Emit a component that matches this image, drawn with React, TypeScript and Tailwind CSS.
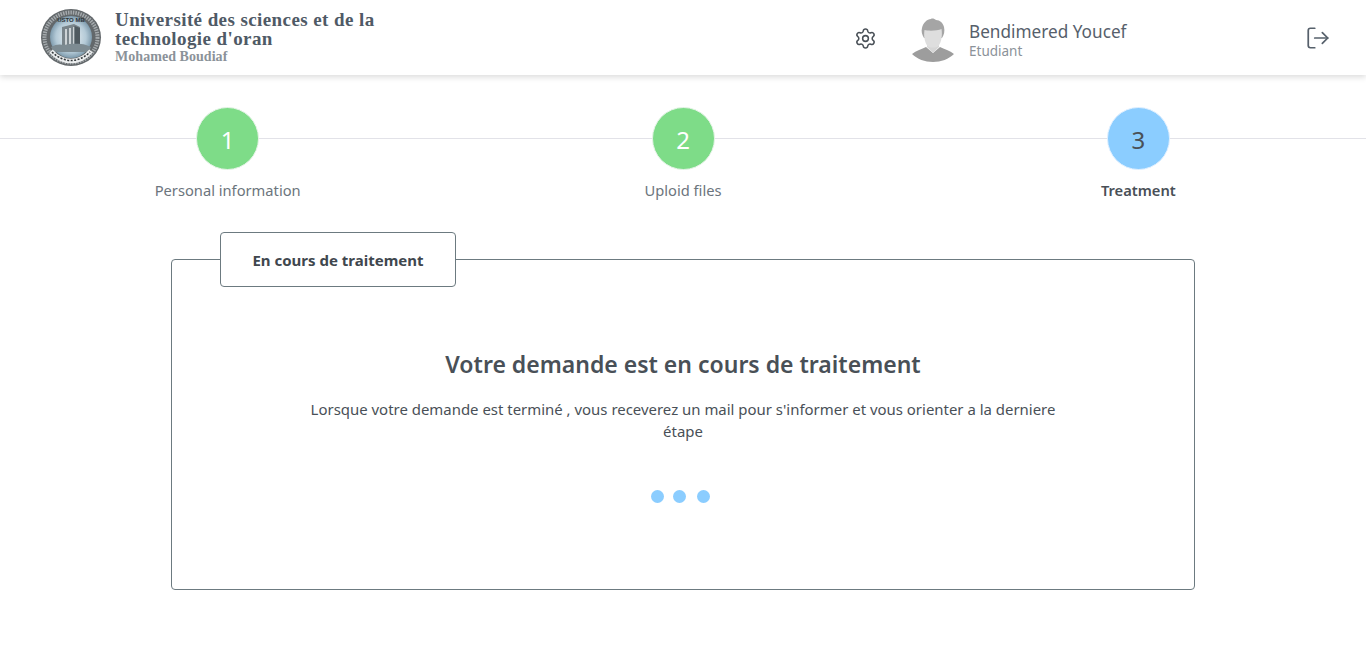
import { LogOut, Settings } from 'lucide-react'

const steps = [
  { n: 1, label: 'Personal information', done: true },
  { n: 2, label: 'Uploid files', done: true },
  { n: 3, label: 'Treatment', done: false },
]

function Logo() {
  return (
    <svg width="62" height="60" viewBox="0 0 62 60">
      <defs>
        <radialGradient id="sky" cx="50%" cy="50%" r="55%">
          <stop offset="0%" stopColor="#eef3f5" />
          <stop offset="65%" stopColor="#b4cad7" />
          <stop offset="100%" stopColor="#6b8a9e" />
        </radialGradient>
      </defs>
      <ellipse cx="31" cy="29.500" rx="30" ry="28.500" fill="#63686b" />
      <ellipse cx="31" cy="29.500" rx="26.500" ry="25" fill="none" stroke="#a4a9ac" strokeWidth="4" strokeDasharray="1.500 1" />
      <circle cx="31" cy="29" r="21" fill="url(#sky)" />
      <text x="31" y="14" textAnchor="middle" fontSize="6" fontWeight="700" fill="#2f3437" fontFamily="Liberation Sans, sans-serif">USTO MB</text>
      <path d="M22 19l12-3 6 3v20H22z" fill="#79848a" />
      <path d="M25 21h2v17h-2zM29 20h2v18h-2zM33 19h1.500v19H33z" fill="#cdd3d6" />
      <path d="M34.500 18l5.500 2v19h-5.500z" fill="#4f5a60" />
      <path d="M11 39c5-3 9-3 13-2 6-1 14-2 22 0l5 2-2 5H14z" fill="#7d8b92" />
      <path d="M11 43c6 7 14 10 20 10s14-3 20-10" fill="none" stroke="#eceeef" strokeWidth="4.500" />
      <path d="M12 44c6 6 13 8.500 19 8.500s13-2.500 19-8.500" fill="none" stroke="#33383b" strokeWidth="1.600" strokeDasharray="2 1.500" />
    </svg>
  )
}

function Avatar() {
  return (
    <svg width="42" height="44" viewBox="0 0 42 44">
      <path d="M0 36c4-3.500 10-5 14-7l7 6 7-6c4 2 10 3.500 14 7-5 5-13 8-21 8S5 41 0 36z" fill="#9d9d9d" />
      <path d="M15 24h12v5l-6 6-6-6z" fill="#d6d6d6" />
      <path d="M12 20c-2-3-3-7-2-10 1-5 5-9 9-9 1-1 4 0 5 1 4 0 7 3 8 7 1 4 0 8-2 11z" fill="#a5a5a5" />
      <path d="M12.500 12c3 1 13 1 17-1 1 6 0 13-3 17-2 2-9 2-11 0-3-4-4-10-3-16z" fill="#dedede" />
    </svg>
  )
}

export default function App() {
  return (
    <div className="h-[651px] bg-white font-['Noto_Sans',sans-serif] text-[#495057] overflow-hidden">
      {/* Header */}
      <header className="h-[75px] flex items-center shadow-[0_2px_6px_rgba(0,0,0,0.15)] pl-[40px] pr-[35px]">
        <Logo />
        <div className="ml-[13px] w-[290px] font-['Liberation_Serif',serif] font-bold">
          <p className="text-[19px] leading-[19px] tracking-[0.41px] text-[#4f5a66]">Université des sciences et de la technologie d'oran</p>
          <p className="text-[14px] leading-[17px] tracking-[0.05px] text-[#8b9299]">Mohamed Boudiaf</p>
        </div>
        <div className="ml-auto flex items-center">
          <Settings className="mt-[2px] w-[23px] h-[23px] text-[#495057] mr-[35px]" strokeWidth={1.6} />
          <div className="mt-[4px]">
            <Avatar />
          </div>
          <div className="mt-[3px] ml-[15px] w-[336px]">
            <p className="text-[17.2px] leading-[24px] text-[#56606b]">Bendimered Youcef</p>
            <p className="text-[13.5px] leading-[15px] text-[#8b9299]">Etudiant</p>
          </div>
          <LogOut className="w-[26px] h-[26px] text-[#56606b]" strokeWidth={1.6} />
        </div>
      </header>

      {/* Stepper */}
      <div className="grid grid-cols-3 mt-[32px]">
        {steps.map((s) => (
          <div key={s.n} className="flex flex-col items-center">
            <div className="w-full flex items-start">
              <div className="flex-1 h-px mt-[31px] bg-[#e2e2e8]" />
              <div
                className={
                  s.done
                    ? 'w-[63px] h-[63px] pt-[2px] rounded-full border border-[#e6f4e8] bg-[#7edc88] text-white text-[24px] flex items-center justify-center'
                    : 'w-[63px] h-[63px] pt-[2px] rounded-full border border-[#e0f0ff] bg-[#8bcdff] text-[#495057] text-[24px] flex items-center justify-center'
                }
              >
                {s.n}
              </div>
              <div className="flex-1 h-px mt-[31px] bg-[#e2e2e8]" />
            </div>
            <p className={s.done ? 'mt-[9px] text-[14.7px] leading-[22px] text-[#6c757d]' : 'mt-[9px] text-[14.7px] leading-[22px] font-semibold text-[#495057]'}>
              {s.label}
            </p>
          </div>
        ))}
      </div>

      {/* Card */}
      <div className="relative mt-[58px] ml-[171px] w-[1024px] h-[331px] border border-[#6c7a80] rounded-[4px] flex flex-col items-center">
        <div className="absolute left-[48px] -top-[28px] w-[236px] h-[55px] pt-[1px] bg-white border border-[#6c7a80] rounded-[4px] flex items-center justify-center text-[15px] font-bold text-[#3f474e]">
          En cours de traitement
        </div>
        <h2 className="mt-[87px] text-[23px] leading-[34px] font-semibold text-[#495057]">Votre demande est en cours de traitement</h2>
        <p className="mt-[18px] w-[760px] text-center text-[14.95px] leading-[21.5px] text-[#495057]">
          Lorsque votre demande est terminé , vous receverez un mail pour s'informer et vous orienter a la derniere<br />étape
        </p>
        <div className="mt-[48px] mr-[6px] flex items-center gap-[9px]">
          <span className="w-[13px] h-[13px] rounded-full bg-[#8bcdff]" />
          <span className="w-[13px] h-[13px] rounded-full bg-[#8bcdff]" />
          <span className="ml-[2px] w-[13px] h-[13px] rounded-full bg-[#8bcdff]" />
        </div>
      </div>
    </div>
  )
}
